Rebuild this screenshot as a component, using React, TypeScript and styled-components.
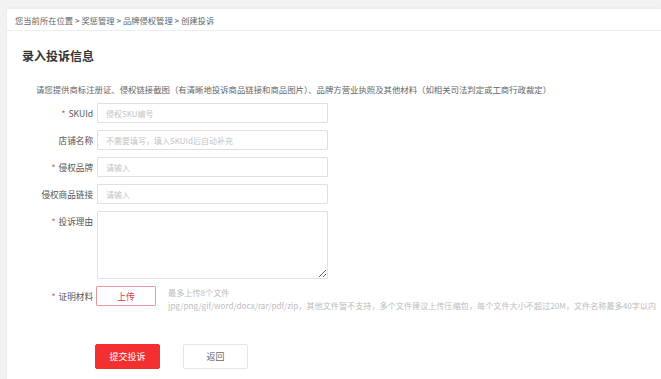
import React from "react";
import styled, { createGlobalStyle } from "styled-components";

const Global = createGlobalStyle`
  html, body { margin: 0; padding: 0; background: #f2f2f2; }
  body { font-family: "Noto Sans CJK SC", "Noto Sans", sans-serif; overflow: hidden; }
  * { box-sizing: border-box; }
`;

const Page = styled.div`
  padding: 9px 0 0 7px;
  min-height: 379px;
`;

const Card = styled.div`
  background: #fff;
  min-height: 370px;
  box-shadow: 0 -1px 2px rgba(0, 0, 0, 0.05);
`;

const Breadcrumb = styled.div`
  height: 22px;
  padding-left: 8px;
  display: flex;
  align-items: center;
  font-size: 8.3px;
  color: #666;
  border-bottom: 1px solid #eeeeee;
  white-space: pre;
`;

const Title = styled.h2`
  margin: 17px 0 0 15px;
  font-size: 12px;
  line-height: 16px;
  font-weight: 700;
  color: #333;
`;

const Desc = styled.p`
  margin: 19px 0 0 29px;
  font-size: 8.4px;
  line-height: 12px;
  color: #666;
  white-space: nowrap;
`;

const Form = styled.div`
  margin-top: 8px;
  display: grid;
  grid-template-columns: 86px auto;
  column-gap: 4px;
  row-gap: 7px;
  align-items: start;
`;

const Label = styled.div<{ $required?: boolean }>`
  text-align: right;
  font-size: 8.6px;
  line-height: 20px;
  color: #555;
  white-space: nowrap;
  &::before {
    content: ${(p) => (p.$required ? '"*"' : '""')};
    color: #f04a4a;
    margin-right: 3px;
  }
`;

const Input = styled.input`
  width: 231px;
  height: 20px;
  border: 1px solid #e0e0e0;
  border-radius: 1px;
  padding: 0 8px;
  font-family: inherit;
  font-size: 8px;
  color: #333;
  outline: none;
  &::placeholder { color: #c4c4c4; }
`;

const TextArea = styled.textarea`
  display: block;
  width: 231px;
  height: 68px;
  border: 1px solid #e0e0e0;
  border-radius: 1px;
  padding: 4px 8px;
  font-family: inherit;
  font-size: 8px;
  outline: none;
  resize: both;
  margin: 0;
`;

const UploadRow = styled.div`
  display: flex;
  align-items: flex-start;
  gap: 12px;
`;

const UploadButton = styled.button`
  width: 60px;
  height: 20px;
  margin-left: -1px;
  border: 1px solid #e59a9a;
  border-radius: 1px;
  background: #fff;
  color: #e4393c;
  font-family: inherit;
  font-size: 9px;
  padding: 0;
`;

const Hint = styled.div`
  font-size: 8.15px;
  line-height: 13px;
  color: #bdbdbd;
  white-space: nowrap;
`;

const Actions = styled.div`
  margin: 32px 0 0 88px;
  display: flex;
  gap: 23px;
`;

const Button = styled.button<{ $primary?: boolean }>`
  width: 65px;
  height: 25px;
  border-radius: 2px;
  font-family: inherit;
  font-size: 9px;
  padding: 0;
  border: 1px solid ${(p) => (p.$primary ? "#f23030" : "#e6e6e6")};
  background: ${(p) => (p.$primary ? "#f23030" : "#fff")};
  color: ${(p) => (p.$primary ? "#fff" : "#666")};
`;

export default function App() {
  return (
    <>
      <Global />
      <Page>
        <Card>
          <Breadcrumb>您当前所在位置 &gt; 奖惩管理 &gt; 品牌侵权管理 &gt; 创建投诉</Breadcrumb>
          <Title>录入投诉信息</Title>
          <Desc>
            请您提供商标注册证、侵权链接截图（有清晰地投诉商品链接和商品图片）、品牌方营业执照及其他材料（如相关司法判定或工商行政裁定）
          </Desc>
          <Form>
            <Label $required>SKUId</Label>
            <Input placeholder="侵权SKU编号" />
            <Label>店铺名称</Label>
            <Input placeholder="不需要填写，填入SKUId后自动补充" />
            <Label $required>侵权品牌</Label>
            <Input placeholder="请输入" />
            <Label>侵权商品链接</Label>
            <Input placeholder="请输入" />
            <Label $required>投诉理由</Label>
            <TextArea />
            <Label $required>证明材料</Label>
            <UploadRow>
              <UploadButton>上传</UploadButton>
              <Hint>
                最多上传8个文件
                <br />
                jpg/png/gif/word/docx/rar/pdf/zip，其他文件暂不支持，多个文件建议上传压缩包，每个文件大小不超过20M，文件名称最多40字以内
              </Hint>
            </UploadRow>
          </Form>
          <Actions>
            <Button $primary>提交投诉</Button>
            <Button>返回</Button>
          </Actions>
        </Card>
      </Page>
    </>
  );
}
